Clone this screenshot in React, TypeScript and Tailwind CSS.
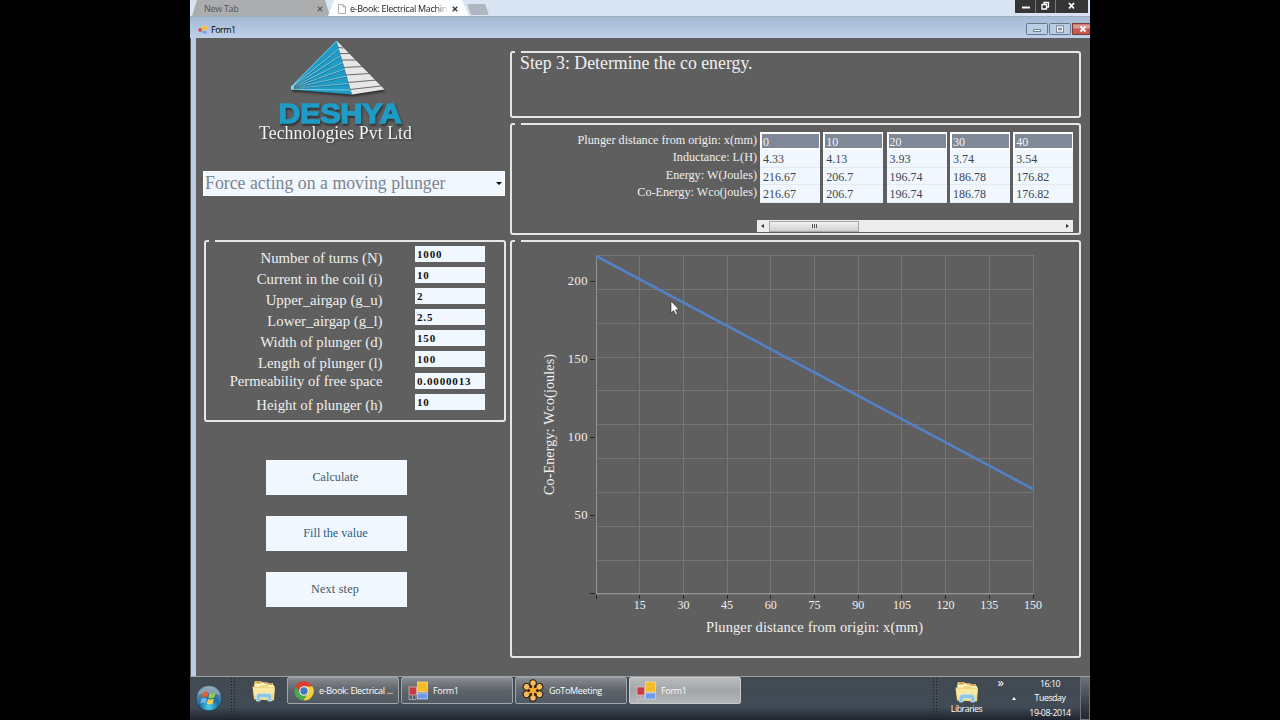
import type { ReactNode } from "react";

const params = [
  { label: "Number of turns (N)", value: "1000" },
  { label: "Current in the coil (i)", value: "10" },
  { label: "Upper_airgap (g_u)", value: "2" },
  { label: "Lower_airgap (g_l)", value: "2.5" },
  { label: "Width of plunger (d)", value: "150" },
  { label: "Length of plunger (l)", value: "100" },
  { label: "Permeability of free space", value: "0.0000013" },
  { label: "Height of plunger (h)", value: "10" },
];

const rowLabels = [
  "Plunger distance from origin: x(mm)",
  "Inductance: L(H)",
  "Energy: W(Joules)",
  "Co-Energy: Wco(joules)",
];

const columns = [
  ["0", "4.33", "216.67", "216.67"],
  ["10", "4.13", "206.7", "206.7"],
  ["20", "3.93", "196.74", "196.74"],
  ["30", "3.74", "186.78", "186.78"],
  ["40", "3.54", "176.82", "176.82"],
];

function GroupBox({ className, children }: { className: string; children: ReactNode }) {
  return (
    <div className={`relative rounded-[3px] border-2 border-[#e6e6e6] ${className}`}>
      {/* empty caption leaves a small gap in the border */}
      <span className="absolute -top-0.5 left-[3px] h-0.5 w-[6px] bg-[#5f5f5f]" />
      {children}
    </div>
  );
}

function FormIcon({ className }: { className: string }) {
  return (
    <svg viewBox="0 0 20 20" className={className}>
      <rect x="9.5" y="1" width="10" height="10" fill="#f3bd2a" stroke="#f8e6a0" strokeWidth=".7" />
      <rect x="1" y="6" width="7.5" height="8" fill="#c63c44" stroke="#eec0c0" strokeWidth=".7" />
      <rect x="9.5" y="12" width="10" height="6" fill="#6f98ea" stroke="#d3e0fb" strokeWidth=".7" />
      <path d="M1 15v3.5h7V15M4.5 15v3.5" fill="none" stroke="#c4c4c8" strokeWidth=".7" />
    </svg>
  );
}

function FolderIcon({ className }: { className: string }) {
  return (
    <svg viewBox="0 0 24 22" className={className}>
      <path d="M2 3 3 1h6l1 1h5l1 1h5v5H2z" fill="#d9c06e" />
      <path d="M3 4h5l1-1h5l1 2h7v3H3z" fill="#fdf4ca" />
      <path d="M5 2h3M12 3h3M17 4h3" stroke="#c78050" />
      <path d="M.5 6.5h7l1-1.500h7l1 1.500h6.500L22 20.500 2 19.500z" fill="#f0d982" />
      <path d="M1 8h21.500L22 14 2 16z" fill="#f8e8a2" />
      <path d="M4.500 21v-4.500q0-3 3-3h9q3 0 3 3V21h-3.500v-3.500H8V21z" fill="#8dc6e4" stroke="#bfe3f0" strokeWidth=".8" />
    </svg>
  );
}

function ChromeIcon() {
  return (
    <svg viewBox="0 0 20 20" className="h-5 w-5 shrink-0">
      <circle cx="10" cy="10" r="9.600" fill="#4aa84f" />
      <path d="M1.700 5.200A9.600 9.600 0 0 1 18.600 5.600L10 5.600 6 12z" fill="#dc3c32" />
      <path d="M18.600 5.600A9.600 9.600 0 0 1 9.500 19.600L14 12 10 5.600z" fill="#f6cf3b" />
      <circle cx="10" cy="10" r="4.800" fill="#f2f2f2" />
      <circle cx="10" cy="10" r="3.700" fill="#4577bd" />
    </svg>
  );
}

function MeetingIcon() {
  return (
    <svg viewBox="0 0 22 23" className="h-[23px] w-[22px] shrink-0">
      {[0, 60, 120, 180, 240, 300].map((a) => (
        <g key={a} transform={`rotate(${a} 11 11.500)`}>
          <path d="M11 11.500V5" stroke="#2b2110" strokeWidth="4.500" />
          <circle cx="11" cy="4" r="3.300" fill="#f4bd62" stroke="#2b2110" strokeWidth="1.100" />
        </g>
      ))}
      {[0, 60, 120].map((a) => (
        <path key={a} d="M11 6v11" stroke="#f5a930" strokeWidth="2" transform={`rotate(${a} 11 11.500)`} />
      ))}
      <circle cx="11" cy="11.500" r="3" fill="#f5a930" />
    </svg>
  );
}

function StartOrb() {
  return (
    <svg viewBox="0 0 28 28" className="h-7 w-7 shrink-0">
      <defs>
        <radialGradient id="orb" cx="50%" cy="85%" r="80%">
          <stop offset="0" stopColor="#4fd3ee" />
          <stop offset=".45" stopColor="#1d6fa3" />
          <stop offset="1" stopColor="#7f93a3" />
        </radialGradient>
      </defs>
      <circle cx="14" cy="14" r="13" fill="url(#orb)" stroke="#28424f" />
      <path d="M3 11a11.500 11.500 0 0 1 22 0q-11-4-22 0z" fill="#b9c6ce" opacity=".45" />
      <path d="M8 8.500q3-1.800 5.500-.3l-1.300 5q-2.600-1.300-5.500.2z" fill="#e8602c" />
      <path d="M14.600 8.800q2.800 1.400 6-.2l-1.400 5q-3 1.500-5.800.2z" fill="#9ccb4c" />
      <path d="M6.400 14.600q2.800-1.400 5.500-.1l-1.300 4.700q-2.700-1.200-5.400.2z" fill="#67b5ec" />
      <path d="M13.100 15q2.900 1.300 5.800-.2l-1.400 4.900q-2.800 1.500-5.700.1z" fill="#fbd04c" />
    </svg>
  );
}

function Logo() {
  return (
    <svg viewBox="256 38 160 108" className="ml-[60px] h-[108px] w-[160px]">
      <g className="drop-shadow-[1px_2px_1px_rgba(0,0,0,0.5)]">
        <path d="M336.500 40.500 291 86.500V89.500L352 94.500z" fill="#1f9cc5" />
        <path d="M336.500 40.500 352 94.500 384.500 89.500z" fill="#e6e6e6" />
        <path
          d="M291 87 336.500 41M291 87.300 339 49M291 87.600 341 55.500M291 88 343 62.500M291 88.300 345 69M291 88.600 347 76M291 89 349 83.500M291 89.300 351 90"
          fill="none"
          stroke="#a9d8e6"
          strokeWidth=".7"
        />
        <path
          d="M294 86.500 339 50M294 87 341 56.500M294 87.500 343 63.500M294 88 345 70M294 88.300 347 77M294 88.800 349 84.500"
          fill="none"
          stroke="#26637a"
          strokeWidth=".6"
        />
        <path
          d="M338 47.500 343.500 48M340 53.500 349.500 53.500M341.500 60 356 60M343.500 67.500 363 66.500M345.500 75 370 73.500M347.500 82.500 377 80M350 89.500 381 86"
          stroke="#5a5a5a"
          strokeWidth=".9"
        />
      </g>
      <text
        x="278.500"
        y="122.500"
        textLength="123"
        lengthAdjust="spacingAndGlyphs"
        className="fill-[#1f9cc5] stroke-[#1f9cc5] font-['Liberation_Sans'] text-[27px] font-bold drop-shadow-[1px_2px_1px_rgba(0,0,0,0.5)]"
        strokeWidth="1.500"
      >
        DESHYA
      </text>
      <text
        x="259"
        y="138.500"
        textLength="153"
        className="fill-[#f2f2f2] font-['Liberation_Serif'] text-[17.8px] drop-shadow-[1px_1px_1px_rgba(0,0,0,0.4)]"
      >
        Technologies Pvt Ltd
      </text>
    </svg>
  );
}

function Chart() {
  return (
    <svg viewBox="512 242 567 414" className="h-[414px] w-[567px] font-['Liberation_Serif',serif]">
      {Array.from({ length: 11 }, (_, i) => (
        <g key={i} stroke="#757575" strokeWidth="1">
          <path d={`M${Math.floor(596 + i * 43.7) + 0.5} 255V594`} />
          <path d={`M596 ${Math.round(255 + i * 33.85) + 0.5}H1033`} />
        </g>
      ))}
      <path d="M596.500 255V593.500H1033" fill="none" stroke="#929292" />
      {["200", "150", "100", "50", ""].map((v, i) => (
        <g key={i}>
          <path d={`M590 ${281.5 + i * 78}h5`} stroke="#262626" />
          <text x="588" y={285 + i * 78} textAnchor="end" fill="#f0f0f0" className="text-[12.5px] tracking-[0.5px]">
            {v}
          </text>
        </g>
      ))}
      {Array.from({ length: 11 }, (_, i) => (
        <g key={i}>
          <path d={`M${Math.floor(596 + i * 43.7) + 0.5} 595v4`} stroke="#262626" />
          <text x={596 + i * 43.7} y="609" textAnchor="middle" fill="#f0f0f0" className="text-[12px]">
            {i > 0 ? i * 15 : ""}
          </text>
        </g>
      ))}
      <path d="M596 256 1033 489" stroke="#5580c4" strokeWidth="2.600" />
      <text x="706" y="631.500" textLength="217" fill="#f0f0f0" className="text-[14.5px]">
        Plunger distance from origin: x(mm)
      </text>
      <text transform="translate(554 495) rotate(-90)" textLength="141" fill="#f0f0f0" className="text-[14px]">
        Co-Energy: Wco(joules)
      </text>
      <path d="M671 301v12l2.700-2.500 1.900 4.200 1.900-.8-1.900-4.100h3.600z" fill="#fff" stroke="#222" strokeWidth=".6" />
    </svg>
  );
}

function TaskButton({ label, icon, active }: { label: string; icon: ReactNode; active?: boolean }) {
  const tone = active
    ? "bg-linear-to-b from-[#b9bbbd] via-[#a2a5a8] to-[#b4b7b9] border-[#c8caca]"
    : "bg-linear-to-b from-[#888b8e] via-[#5d646b] to-[#515962] border-[#a0a5a9]";
  return (
    <div className={`flex h-[27px] w-[112px] items-center gap-[5px] rounded-[2px] border pl-[6px] ${tone}`}>
      {icon}
      <span className="whitespace-nowrap text-[9px] tracking-[-0.32px] text-white">{label}</span>
    </div>
  );
}

function Grip() {
  return (
    <span className="h-10 w-[7px] bg-[radial-gradient(#15191d_0.8px,transparent_1px)] bg-[length:3px_3px]" />
  );
}

export default function App() {
  return (
    <div className="flex h-[720px] w-[1280px] justify-center overflow-hidden bg-black font-['Open_Sans','Noto_Sans',sans-serif]">
      <div className="flex w-[900px] flex-col overflow-hidden">
        {/* browser tab strip */}
        <div className="flex h-[17px] shrink-0 border-b border-[#a3adb9] bg-[#d8e4f2] text-[9px] leading-4">
          <div className="ml-0.5 flex w-[138px] justify-between bg-[#acadaf] pl-3 pr-[7px] text-[#555] [clip-path:polygon(5px_0,133px_0,100%_100%,0_100%)]">
            <span className="pt-px tracking-[-0.3px]">New Tab</span>
            <svg viewBox="0 0 6 6" className="mt-[6px] h-[6px] w-[6px]">
              <path d="m.7.7 4.600 4.600m0-4.600L.7 5.300" stroke="#555" strokeWidth="1.100" />
            </svg>
          </div>
          <div className="-ml-0.5 flex w-[141px] bg-[#fcfdfe] pl-[10px] text-[#222] [clip-path:polygon(6px_0,134px_0,100%_100%,0_100%)]">
            <svg viewBox="0 0 8 10" className="mt-1 h-[10px] w-2 shrink-0">
              <path d="M.5.5h4.500l2.500 2.500v6.500h-7zM5 .5V3h2.500" fill="#fff" stroke="#999" strokeWidth=".8" />
            </svg>
            <span className="ml-1 w-[98px] shrink-0 whitespace-nowrap pt-px text-[9px] tracking-[-0.3px] [mask-image:linear-gradient(to_right,black_88%,transparent)]">
              e-Book: Electrical Machin
            </span>
            <svg viewBox="0 0 6 6" className="ml-1 mt-[6px] h-[6px] w-[6px] shrink-0">
              <path d="m.7.7 4.600 4.600m0-4.600L.7 5.300" stroke="#333" strokeWidth="1.300" />
            </svg>
          </div>
          <div className="-ml-0.5 mt-1 h-[11px] w-[22px] rounded-[2px] bg-[#aeb7bf] [clip-path:polygon(0_0,18px_0,100%_100%,4px_100%)]" />
          <div className="ml-auto mr-0.5 flex h-[13px] w-[73px] bg-[#353535] text-white">
            <svg viewBox="0 0 73 13" className="h-[13px] w-[73px]">
              <path d="M20.500 0v13M40.500 0v13" stroke="#777" />
              <path d="M7 7.500h8" stroke="#fff" strokeWidth="2" />
              <path d="M27 4.500h4.500V9H27zM29 4.500v-2h4.500V7h-2" fill="none" stroke="#fff" strokeWidth="1.300" />
              <path d="m54 3 5 5.500m0-5.500-5 5.500" stroke="#fff" strokeWidth="1.800" />
            </svg>
          </div>
        </div>

        {/* form title bar */}
        <div className="flex h-[21px] shrink-0 items-center overflow-hidden bg-linear-to-b from-[#a5bad4] to-[#bdd0e8] pl-2 pt-1 text-[9px] tracking-[-0.5px] text-black">
          <FormIcon className="h-[10px] w-[9px]" />
          <span className="ml-1">Form1</span>
          <svg viewBox="0 0 64 13" className="ml-auto h-[13px] w-16 shrink-0">
            <rect x=".5" y=".5" width="21" height="11" rx="1" fill="#b9cde5" stroke="#66788f" />
            <rect x="23.500" y=".5" width="21" height="11" rx="1" fill="#b9cde5" stroke="#66788f" />
            <path d="M64 .5H46.500v11H64z" fill="#c8594f" stroke="#7c3a3a" />
            <path d="M47 1.500h17v4H47z" fill="#d99a94" />
            <path d="M7.500 6.500h7v2h-7z" fill="#fff" stroke="#56657a" strokeWidth=".8" />
            <path d="M31.500 4h5v4h-5z" fill="none" stroke="#56657a" strokeWidth="2.800" />
            <path d="M31.500 4h5v4h-5z" fill="none" stroke="#fff" strokeWidth="1.400" />
            <path d="m54.500 3.500 5 5m0-5-5 5" stroke="#fff" strokeWidth="1.800" />
          </svg>
        </div>

        {/* form body */}
        <div className="flex h-[638px] shrink-0 border-l border-[#555] bg-[#5f5f5f] font-['Liberation_Serif',serif] text-[#f0f0f0]">
          <div className="w-[5px] shrink-0 bg-[#bccde3]" />
          <div className="flex w-[314px] shrink-0 flex-col">
            <Logo />
            <div className="ml-[7px] mt-[25px] flex h-[25px] w-[302px] items-center justify-between border border-white bg-[#f0f7ff] pl-px pr-[2px] text-[17.8px] text-[#7d838d]">
              <span>Force acting on a moving plunger</span>
              <span className="border-x-[3px] border-t-[3px] border-x-transparent border-t-black" />
            </div>

            <GroupBox className="ml-2 mt-[44px] h-[182px] w-[302px] pt-1">
              {params.map((p) => (
                <div key={p.label} className="flex h-[21.1px] items-start">
                  <span
                    className={`w-[176.5px] whitespace-nowrap text-right leading-[17px] ${
                      p.value === "0.0000013" ? "text-[14.6px]" : "pt-[3.5px] text-[14.8px]"
                    }`}
                  >
                    {p.label}
                  </span>
                  <span className="ml-[32.5px] h-4 w-[70px] bg-[#f0f7ff] pl-0.5 text-[11px] font-bold leading-4 tracking-[0.85px] text-[#111]">
                    {p.value}
                  </span>
                </div>
              ))}
            </GroupBox>

            <div className="ml-[70px] mt-[38px] flex w-[141px] flex-col gap-[21px] text-[12.2px] text-[#4a565c]">
              <button className="h-[35px] bg-[#f0f7ff] pr-0.5">Calculate</button>
              <button className="h-[35px] bg-[#f0f7ff] pr-0.5 text-[#2a5f88]">Fill the value</button>
              <button className="h-[35px] bg-[#f0f7ff] pr-[3px] tracking-[0.2px]">Next step</button>
            </div>
          </div>

          <div className="flex flex-col pt-[13px]">
            <GroupBox className="h-[67px] w-[571px] pl-2 text-[17.8px] leading-[21px]">
              Step 3: Determine the co energy.
            </GroupBox>

            <GroupBox className="mt-[5px] h-[112px] w-[571px]">
              <div className="flex pt-[7px]">
                <div className="w-[245px] text-right text-[12.2px] leading-[17.3px]">
                  {rowLabels.map((l) => (
                    <div key={l}>{l}</div>
                  ))}
                </div>
                <div className="ml-[3px] flex gap-[3.3px] text-[12px] leading-[17px] text-[#3c464e]">
                  {columns.map((col) => (
                    <div key={col[0]} className="h-[71px] w-[60px] bg-[#f0f7ff]">
                      <div className="h-[18px] border-2 border-r border-white bg-[#7e8896] pl-px leading-4 text-[#f4f6f9]">
                        {col[0]}
                      </div>
                      {col.slice(1).map((v, i) => (
                        <div key={i} className="h-[17.6px] border-b border-[#e3e9ee] pl-[3px] pt-px">
                          {v}
                        </div>
                      ))}
                    </div>
                  ))}
                </div>
              </div>
              <div className="ml-[245px] mt-[17px] flex h-3 w-[316px] items-center justify-between bg-[#ececec] px-1">
                <span className="border-y-2 border-r-[3px] border-y-transparent border-r-[#333]" />
                <span className="ml-[5px] mr-auto flex h-[11px] w-[90px] items-center justify-center gap-px border border-[#a5a5a5] bg-linear-to-b from-[#f2f2f2] to-[#cfcfcf]">
                  <i className="h-1 w-px bg-[#555]" />
                  <i className="h-1 w-px bg-[#555]" />
                  <i className="h-1 w-px bg-[#555]" />
                </span>
                <span className="border-y-2 border-l-[3px] border-y-transparent border-l-[#333]" />
              </div>
            </GroupBox>

            <GroupBox className="mt-[5px] h-[418px] w-[571px]">
              <Chart />
            </GroupBox>
          </div>
        </div>

        {/* taskbar */}
        <div className="flex h-11 shrink-0 border-t border-[#9ba1a6] bg-linear-to-b from-[#424a52] via-[#414b56] via-70% to-[#1d242d] text-white">
          <div className="flex w-[97px] items-start pl-[5px]">
            <div className="pt-[7px]">
              <StartOrb />
            </div>
            <div className="ml-[7px] flex">
              <Grip />
            </div>
            <FolderIcon className="ml-[15px] mt-[3px] h-[22px] w-6" />
          </div>
          <div className="flex gap-0.5">
            <TaskButton label="e-Book: Electrical ..." icon={<ChromeIcon />} />
            <TaskButton label="Form1" icon={<FormIcon className="h-5 w-5" />} />
            <TaskButton label="GoToMeeting" icon={<MeetingIcon />} />
            <TaskButton label="Form1" icon={<FormIcon className="h-5 w-5" />} active />
          </div>
          <div className="ml-auto flex text-[8.8px] tracking-[-0.45px]">
            <Grip />
            <div className="ml-[4px] flex w-[48px] flex-col items-center">
              <FolderIcon className="mt-1 h-[22px] w-6" />
              <span className="leading-[13px]">Libraries</span>
            </div>
            <span className="ml-[7px] text-[13px] leading-[11px] tracking-normal">»</span>
            <span className="ml-[8px] mt-[20px] h-0 border-x-[2.5px] border-b-[3px] border-x-transparent border-b-white" />
            <div className="ml-[13px] flex w-[42px] flex-col items-center whitespace-nowrap leading-[14.3px]">
              <span>16:10</span>
              <span>Tuesday</span>
              <span>19-08-2014</span>
            </div>
            <div className="ml-[9px] h-[43px] w-[10px] border border-[#6d747b] bg-linear-to-b from-[#6a7077] to-[#20262d]" />
          </div>
        </div>
      </div>
    </div>
  );
}
